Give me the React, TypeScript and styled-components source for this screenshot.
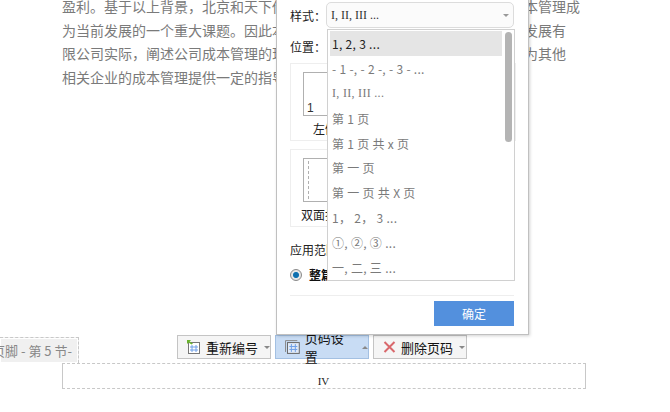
import React from "react"
import styled, { createGlobalStyle } from "styled-components"

const GlobalStyle = createGlobalStyle`
  html, body {
    margin: 0;
    padding: 0;
    background: #fff;
  }
  body {
    font-family: "Noto Sans CJK SC", "Liberation Sans", sans-serif;
  }
`

const Page = styled.div`
  position: relative;
  width: 670px;
  height: 412px;
  overflow: hidden;
`

const Article = styled.div`
  height: 335px;
  padding: 0 0 0 62px;
  margin-top: 0;
  overflow: hidden;
`

const ArticleInner = styled.div`
  margin-top: -5px;
`

const Line = styled.div`
  height: 23.7px;
  line-height: 23.7px;
  font-size: 14px;
  color: #7a7a7a;
  white-space: nowrap;
`

const ToolRow = styled.div`
  display: flex;
  height: 28px;
  box-sizing: border-box;
`

const SectionTag = styled.div`
  width: 79px;
  height: 26px;
  margin-top: 2px;
  box-sizing: border-box;
  border: 1px dashed #c8c8c8;
  border-left: 0;
  border-bottom: 0;
  background: #f0f0f0;
  box-shadow: inset 0 0 0 1px #fff;
  display: flex;
  justify-content: flex-end;
  align-items: center;
  padding-right: 6px;
  overflow: hidden;
  white-space: nowrap;
  font-size: 13px;
  color: #888;
`

const Tools = styled.div`
  display: flex;
  gap: 4px;
  margin-left: 98px;
`

const ToolButton = styled.div<{ $active?: boolean }>`
  width: 94px;
  height: 24px;
  box-sizing: border-box;
  display: flex;
  align-items: center;
  padding-left: 9px;
  gap: 5px;
  font-size: 13px;
  color: #111;
  background: ${p => (p.$active ? "#c8dcf4" : "#f5f5f5")};
  border: 1px solid ${p => (p.$active ? "#a3c0e2" : "#c4c4c4")};
`

const Caret = styled.span<{ $up?: boolean }>`
  width: 0;
  height: 0;
  margin-left: 1px;
  border-left: 3px solid transparent;
  border-right: 3px solid transparent;
  ${p =>
    p.$up ? "border-bottom: 3px solid #888;" : "border-top: 3px solid #888;"}
`

const FooterBox = styled.div`
  width: 524px;
  height: 26px;
  margin-left: 62px;
  box-sizing: border-box;
  border-top: 1px dashed #c8c8c8;
  border-bottom: 1px dashed #c8c8c8;
  border-left: 1px solid #c8c8c8;
  border-right: 1px solid #c8c8c8;
  display: flex;
  align-items: flex-end;
  justify-content: center;
  font-family: "Liberation Serif", serif;
  font-size: 11px;
  line-height: 13px;
  color: #222;
  padding-bottom: 0;
  padding-right: 1px;
`

const Dialog = styled.div`
  position: absolute;
  left: 276px;
  top: -20px;
  width: 253px;
  height: 355px;
  box-sizing: border-box;
  background: #fff;
  border: 1px solid #c0c0c0;
  border-top: 0;
  box-shadow: 1px 1px 3px rgba(0, 0, 0, 0.18);
  padding: 22px 14px 0 13px;
  font-size: 12px;
  color: #222;
`

const FieldRow = styled.div`
  display: flex;
  align-items: center;
  height: 26px;
`

const FieldLabel = styled.div`
  width: 36px;
  flex: none;
  font-size: 12px;
`

const SelectBox = styled.div`
  flex: 1;
  height: 26px;
  box-sizing: border-box;
  border: 1px solid #dcdcdc;
  border-radius: 5px;
  background: #fbfbfb;
  display: flex;
  align-items: center;
  justify-content: space-between;
  padding: 0 4px 0 4px;
  font-family: "Liberation Serif", serif;
  font-size: 12px;
  color: #333;
`

const SelectCaret = styled.span`
  width: 0;
  height: 0;
  border-left: 3px solid transparent;
  border-right: 3px solid transparent;
  border-top: 3px solid #999;
`

const PositionRow = styled(FieldRow)`
  margin-top: 6px;
  height: 24px;
`

const LayoutGrid = styled.div`
  display: grid;
  grid-template-columns: repeat(3, 70px);
  gap: 8px;
  margin-top: 5px;
`

const LayoutCard = styled.div`
  height: 78px;
  box-sizing: border-box;
  border: 1px solid #eeeeee;
  padding-top: 8px;
  display: flex;
  flex-direction: column;
  align-items: center;
  font-size: 12px;
`

const Sheet = styled.div`
  position: relative;
  width: 44px;
  height: 44px;
  box-sizing: border-box;
  border: 1px solid #b0b0b0;
  flex: none;
  font-size: 12px;
  margin-bottom: 4px;
`

const SheetNumber = styled.span`
  position: absolute;
  left: 3px;
  bottom: 0;
  font-family: "Liberation Sans", sans-serif;
  font-size: 12px;
  color: #333;
`

const SheetFold = styled.span`
  position: absolute;
  left: 4px;
  top: 2px;
  bottom: 2px;
  border-left: 1px dashed #b0b0b0;
`

const ScopeLabel = styled.div`
  margin-top: 14px;
  height: 18px;
  line-height: 18px;
  font-size: 12px;
`

const RadioRow = styled.div`
  display: flex;
  align-items: center;
  gap: 7px;
  margin-top: 7px;
  font-size: 12px;
  font-weight: 700;
  color: #111;
`

const Radio = styled.span`
  width: 12px;
  height: 12px;
  box-sizing: border-box;
  border-radius: 50%;
  border: 1px solid #8a8a8a;
  background: radial-gradient(circle, #0f6fae 0 2.5px, #5fa6cf 3px, #e6e6e6 3.5px);
  flex: none;
`

const DialogFooter = styled.div`
  position: absolute;
  left: 13px;
  right: 14px;
  bottom: 8px;
  border-top: 1px solid #eeeeee;
  padding-top: 5px;
  display: flex;
  justify-content: flex-end;
`

const ConfirmButton = styled.div`
  width: 80px;
  height: 25px;
  background: #5390dd;
  color: #fff;
  font-size: 12px;
  display: flex;
  align-items: center;
  justify-content: center;
`

const Dropdown = styled.div`
  position: absolute;
  left: 50px;
  top: 49px;
  width: 188px;
  height: 252px;
  box-sizing: border-box;
  background: #fff;
  border: 1px solid #d0d0d0;
  padding: 1px 0 0 2px;
  overflow: hidden;
`

const Option = styled.div<{ $selected?: boolean; $serif?: boolean }>`
  width: 172px;
  height: 24.9px;
  box-sizing: border-box;
  padding-left: 2px;
  display: flex;
  align-items: center;
  white-space: pre;
  font-size: 12px;
  letter-spacing: 0.3px;
  font-family: ${p =>
    p.$serif
      ? '"Liberation Serif", serif'
      : '"Noto Sans CJK SC", "Liberation Sans", sans-serif'};
  color: ${p => (p.$selected ? "#222" : "#7a7a7a")};
  background: ${p => (p.$selected ? "#e5e5e5" : "transparent")};
`

const ScrollThumb = styled.div`
  position: absolute;
  top: 2px;
  right: 2px;
  width: 7px;
  height: 110px;
  border-radius: 4px;
  background: #b4b4b4;
`

const RenumberIcon = () => (
  <svg width="14" height="14" viewBox="0 0 14 14">
    <rect x="1.5" y="2.5" width="11" height="11" fill="#fff" stroke="#777" />
    <path
      d="M5 5v7M9 5v7M3 7h8M3 10h8"
      stroke="#6f9fe8"
      strokeWidth="1"
      fill="none"
    />
    <path d="M0 0h4L2.6 1.4 6 3.5 4.5 4.6 1.5 2.6 0 4z" fill="#6ab42d" />
  </svg>
)

const SettingsIcon = () => (
  <svg width="15" height="14" viewBox="0 0 15 14">
    <path d="M.5 12V.5h12" stroke="#8a8a8a" fill="none" />
    <rect x="2.5" y="2.5" width="12" height="11" fill="#dfe9f7" stroke="#666" />
    <path
      d="M6.5 4v8M10.5 4v8M4.5 6.5h8M4.5 9.5h8"
      stroke="#6f9fe8"
      fill="none"
    />
  </svg>
)

const DeleteIcon = () => (
  <svg width="13" height="12" viewBox="0 0 13 12">
    <path
      d="M1.5 1l10 10M11.5 1l-10 10"
      stroke="#d9686c"
      strokeWidth="2"
      fill="none"
    />
  </svg>
)

const options: { label: string; serif?: boolean }[] = [
  { label: "1, 2, 3 ..." },
  { label: "- 1 -, - 2 -, - 3 - ..." },
  { label: "I, II, III ...", serif: true },
  { label: "第 1 页" },
  { label: "第 1 页 共 x 页" },
  { label: "第 一 页" },
  { label: "第 一 页 共 X 页" },
  { label: "1， 2， 3 ..." },
  { label: "①, ②, ③ ..." },
  { label: "一, 二, 三 ..." },
]

const App = () => (
  <Page>
    <GlobalStyle />
    <Article>
      <ArticleInner>
        <Line>盈利。基于以上背景，北京和天下传媒文化传播有限公司如何加强自身的成本管理成</Line>
        <Line>为当前发展的一个重大课题。因此本文立足于北京和天下传媒文化传播投资发展有</Line>
        <Line>限公司实际，阐述公司成本管理的现状，分析存在的问题并提出对策，以期为其他</Line>
        <Line>相关企业的成本管理提供一定的指导。</Line>
      </ArticleInner>
    </Article>
    <ToolRow>
      <SectionTag>页脚 - 第 5 节-</SectionTag>
      <Tools>
        <ToolButton>
          <RenumberIcon />
          重新编号
          <Caret />
        </ToolButton>
        <ToolButton $active>
          <SettingsIcon />
          页码设置
          <Caret $up />
        </ToolButton>
        <ToolButton>
          <DeleteIcon />
          删除页码
          <Caret />
        </ToolButton>
      </Tools>
    </ToolRow>
    <FooterBox>IV</FooterBox>
    <Dialog>
      <FieldRow>
        <FieldLabel>样式：</FieldLabel>
        <SelectBox>
          I, II, III ...
          <SelectCaret />
        </SelectBox>
      </FieldRow>
      <PositionRow>
        <FieldLabel>位置：</FieldLabel>
      </PositionRow>
      <LayoutGrid>
        <LayoutCard>
          <Sheet>
            <SheetNumber>1</SheetNumber>
          </Sheet>
          左侧
        </LayoutCard>
        <LayoutCard />
        <LayoutCard />
        <LayoutCard>
          <Sheet>
            <SheetFold />
          </Sheet>
          双面打印
        </LayoutCard>
      </LayoutGrid>
      <ScopeLabel>应用范围：</ScopeLabel>
      <RadioRow>
        <Radio />
        整篇文档
      </RadioRow>
      <DialogFooter>
        <ConfirmButton>确定</ConfirmButton>
      </DialogFooter>
      <Dropdown>
        {options.map((o, i) => (
          <Option key={o.label} $selected={i === 0} $serif={o.serif}>
            {o.label}
          </Option>
        ))}
        <ScrollThumb />
      </Dropdown>
    </Dialog>
  </Page>
)

export default App
